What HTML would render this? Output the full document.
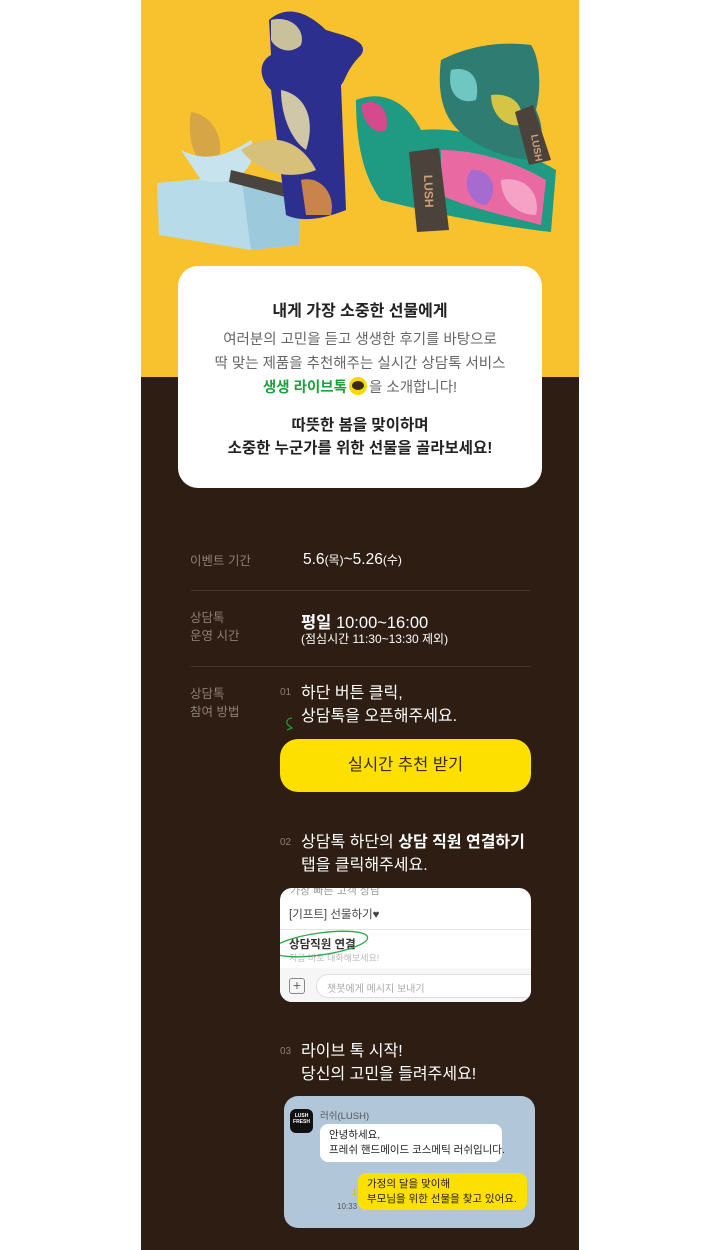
<!DOCTYPE html>
<html><head><meta charset="utf-8"><style>
*{margin:0;padding:0;box-sizing:border-box}
body{width:720px;height:1250px;background:#fff;position:relative;overflow:hidden;font-family:"Liberation Sans","Noto Sans CJK KR",sans-serif}
.col{position:absolute;left:141px;top:0;width:438px;height:1250px;background:#2e1d12;overflow:hidden}
.yel{position:absolute;left:0;top:0;width:438px;height:377px;background:#f8c22e}
.a{position:absolute;white-space:nowrap}
.card{position:absolute;left:37px;top:266px;width:364px;height:222px;background:#fff;border-radius:20px;text-align:center}
.lbl{color:#8c7f73;font-size:12.5px;line-height:18px}
.w{color:#fff}
.hr{position:absolute;left:50px;width:340px;height:1px;background:#46352a}
.num{color:#8c7f73;font-size:10px}
.step{color:#fff;font-size:16px;line-height:22.5px}
</style></head><body>
<div class="col">
<div class="yel">
<svg width="438" height="260" style="position:absolute;left:0;top:0">
<polygon points="16,183 100,175 160,185 158,245 110,250 18,235" fill="#b7dbe8"/>
<polygon points="100,175 160,185 158,245 110,250" fill="#9cc9db"/>
<path d="M50,112 C75,115 90,150 70,170 C55,165 45,140 50,112Z" fill="#d6a545"/>
<path d="M40,150 C60,160 80,160 110,140 C120,160 100,190 60,180Z" fill="#c7e3ee"/>
<polygon points="90,170 150,185 148,198 88,182" fill="#4a4440"/>
<path d="M128,20 C150,0 175,20 185,30 C200,35 230,40 220,55 C205,70 205,80 200,85 L205,210 C180,220 160,222 145,215 L130,90 C115,75 120,60 130,55Z" fill="#2d2f8e"/>
<path d="M130,20 C150,15 165,30 160,45 C150,55 135,50 130,40Z" fill="#c9c19a"/>
<path d="M140,90 C165,95 175,120 165,150 C150,140 140,115 140,90Z" fill="#cfc7a5"/>
<path d="M100,150 C130,130 160,140 175,170 C150,180 120,175 100,150Z" fill="#d7c07a"/>
<path d="M160,180 C180,175 195,195 190,215 L165,215Z" fill="#c8844a"/>
<path d="M215,100 C240,90 265,100 280,130 C330,125 380,150 415,170 L410,232 C350,225 300,215 240,200 C225,180 215,150 215,100Z" fill="#1f9a83"/>
<path d="M300,150 C340,150 380,165 405,180 L400,225 C360,215 320,205 300,195Z" fill="#e96aa3"/>
<path d="M330,170 C350,168 360,190 345,205 C330,205 320,185 330,170Z" fill="#a56bd1"/>
<path d="M220,105 C235,95 250,110 245,130 C235,135 222,125 220,105Z" fill="#d54a8c"/>
<path d="M360,180 C385,175 400,195 395,215 C375,215 360,200 360,180Z" fill="#f4a3c7"/>
<path d="M300,60 C320,50 350,40 390,45 C400,60 400,90 395,110 C405,130 400,150 395,160 C370,160 345,150 330,140 C305,125 295,100 300,60Z" fill="#2f7d72"/>
<path d="M310,70 C330,65 340,80 335,100 C320,105 305,95 310,70Z" fill="#6fc6c2"/>
<path d="M350,95 C370,92 385,105 380,125 C365,128 350,115 350,95Z" fill="#d5c545"/>
<polygon points="374,112 392,105 410,160 388,165" fill="#4b423c"/>
<text x="390" y="135" fill="#c9a27a" font-size="10" font-weight="bold" transform="rotate(80 390 135)">LUSH</text>
<polygon points="268,152 298,148 308,230 276,232" fill="#4b423c"/>
<text x="283" y="175" fill="#c9a27a" font-size="12" font-weight="bold" transform="rotate(88 283 175)">LUSH</text>
</svg>
</div>
<div class="card">
<div class="a" style="left:0;right:0;top:31px;font-size:16px;font-weight:bold;color:#222">내게 가장 소중한 선물에게</div>
<div class="a" style="left:0;right:0;top:62px;font-size:14.5px;color:#666;line-height:24px">여러분의 고민을 듣고 생생한 후기를 바탕으로<br>딱 맞는 제품을 추천해주는 실시간 상담톡 서비스<br><span style="color:#1aa33a;font-weight:bold">생생 라이브톡</span><span style="display:inline-block;width:18px;height:18px;border-radius:50%;background:#f7d800;vertical-align:-3px;margin:0 2px;position:relative"><span style="position:absolute;left:3px;top:4px;width:12px;height:9px;border-radius:50%;background:#3a2a1a"></span></span>을 소개합니다!</div>
<div class="a" style="left:0;right:0;top:148px;font-size:15.5px;font-weight:bold;color:#222;line-height:23px">따뜻한 봄을 맞이하며<br>소중한 누군가를 위한 선물을 골라보세요!</div>
</div>
<div class="a lbl" style="left:49px;top:552px">이벤트 기간</div>
<div class="a w" style="left:162px;top:551px;font-size:15.5px">5.6<span style="font-size:12px">(목)</span>~5.26<span style="font-size:12px">(수)</span></div>
<div class="hr" style="top:590px"></div>
<div class="a lbl" style="left:49px;top:609px">상담톡<br>운영 시간</div>
<div class="a w" style="left:160px;top:609px;font-size:16.5px"><b>평일</b> 10:00~16:00</div>
<div class="a w" style="left:160px;top:630px;font-size:12px">(점심시간 11:30~13:30 제외)</div>
<div class="hr" style="top:666px"></div>
<div class="a lbl" style="left:49px;top:685px">상담톡<br>참여 방법</div>
<div class="a num" style="left:139px;top:687px">01</div>
<div class="a step" style="left:160px;top:683px">하단 버튼 클릭,<br>상담톡을 오픈해주세요.</div>
<svg class="a" style="left:143px;top:716px" width="14" height="16"><path d="M8,2 C2,2 1,9 6,10 M3,14 L8,12 L4,9" stroke="#1f9a3c" stroke-width="1.3" fill="none"/></svg>
<div class="a" style="left:139px;top:739px;width:251px;height:53px;background:#fde000;border-radius:18px;text-align:center;line-height:53px;font-size:16.5px;color:#3a2a10">실시간 추천 받기</div>
<div class="a num" style="left:139px;top:837px">02</div>
<div class="a step" style="left:160px;top:832px">상담톡 하단의 <b>상담 직원 연결하기</b><br>탭을 클릭해주세요.</div>
<div class="a" style="left:139px;top:888px;width:251px;height:114px;background:#fff;border-radius:12px;overflow:hidden">
<div class="a" style="left:10px;top:-6px;font-size:11px;color:#999">가장 빠른 고객 상담</div>
<div class="a" style="left:9px;top:18px;font-size:11.5px;color:#444">[기프트] 선물하기♥</div>
<div class="a" style="left:0;right:0;top:41px;height:1px;background:#e4e4e4"></div>
<div class="a" style="left:9px;top:48px;font-size:11.5px;color:#333;font-weight:bold">상담직원 연결</div>
<div class="a" style="left:9px;top:63px;font-size:9px;color:#bbb">지금 바로 대화해보세요!</div>
<div class="a" style="left:0;right:0;top:80px;height:34px;background:#f6f6f6"></div>
<div class="a" style="left:9px;top:90px;width:16px;height:16px;border:1px solid #888;border-radius:3px;text-align:center;line-height:13px;font-size:14px;color:#666">+</div>
<div class="a" style="left:36px;top:86px;width:230px;height:24px;border:1px solid #ddd;border-radius:12px;background:#fff;font-size:10px;color:#aaa;padding:5px 0 0 10px">챗봇에게 메시지 보내기</div>
<svg class="a" style="left:-10px;top:36px" width="110" height="40"><ellipse cx="50" cy="20" rx="48" ry="11" transform="rotate(-8 50 20)" stroke="#2aa84a" stroke-width="1.3" fill="none"/></svg>
</div>
<div class="a num" style="left:139px;top:1046px">03</div>
<div class="a step" style="left:160px;top:1041px">라이브 톡 시작!<br>당신의 고민을 들려주세요!</div>
<div class="a" style="left:143px;top:1096px;width:251px;height:132px;background:#b1c6d8;border-radius:14px">
<div class="a" style="left:6px;top:13px;width:23px;height:24px;background:#111;border-radius:6px;color:#fff;font-size:5px;font-weight:bold;text-align:center;padding-top:4px;line-height:6px">LUSH<br>FRESH</div>
<div class="a" style="left:36px;top:12px;font-size:9.5px;color:#555">러쉬(LUSH)</div>
<div class="a" style="left:36px;top:28px;width:182px;height:38px;background:#fff;border-radius:8px;font-size:10.5px;color:#222;padding:4px 0 0 9px;line-height:15px">안녕하세요,<br>프레쉬 핸드메이드 코스메틱 러쉬입니다.</div>
<div class="a" style="left:74px;top:77px;width:169px;height:37px;background:#fde000;border-radius:8px;font-size:10.5px;color:#222;padding:4px 0 0 9px;line-height:15px">가정의 달을 맞이해<br>부모님을 위한 선물을 찾고 있어요.</div>
<div class="a" style="left:68px;top:92px;font-size:8px;color:#d8b800">1</div>
<div class="a" style="left:53px;top:106px;font-size:8px;color:#555">10:33</div>
</div>
</div>
</body></html>
